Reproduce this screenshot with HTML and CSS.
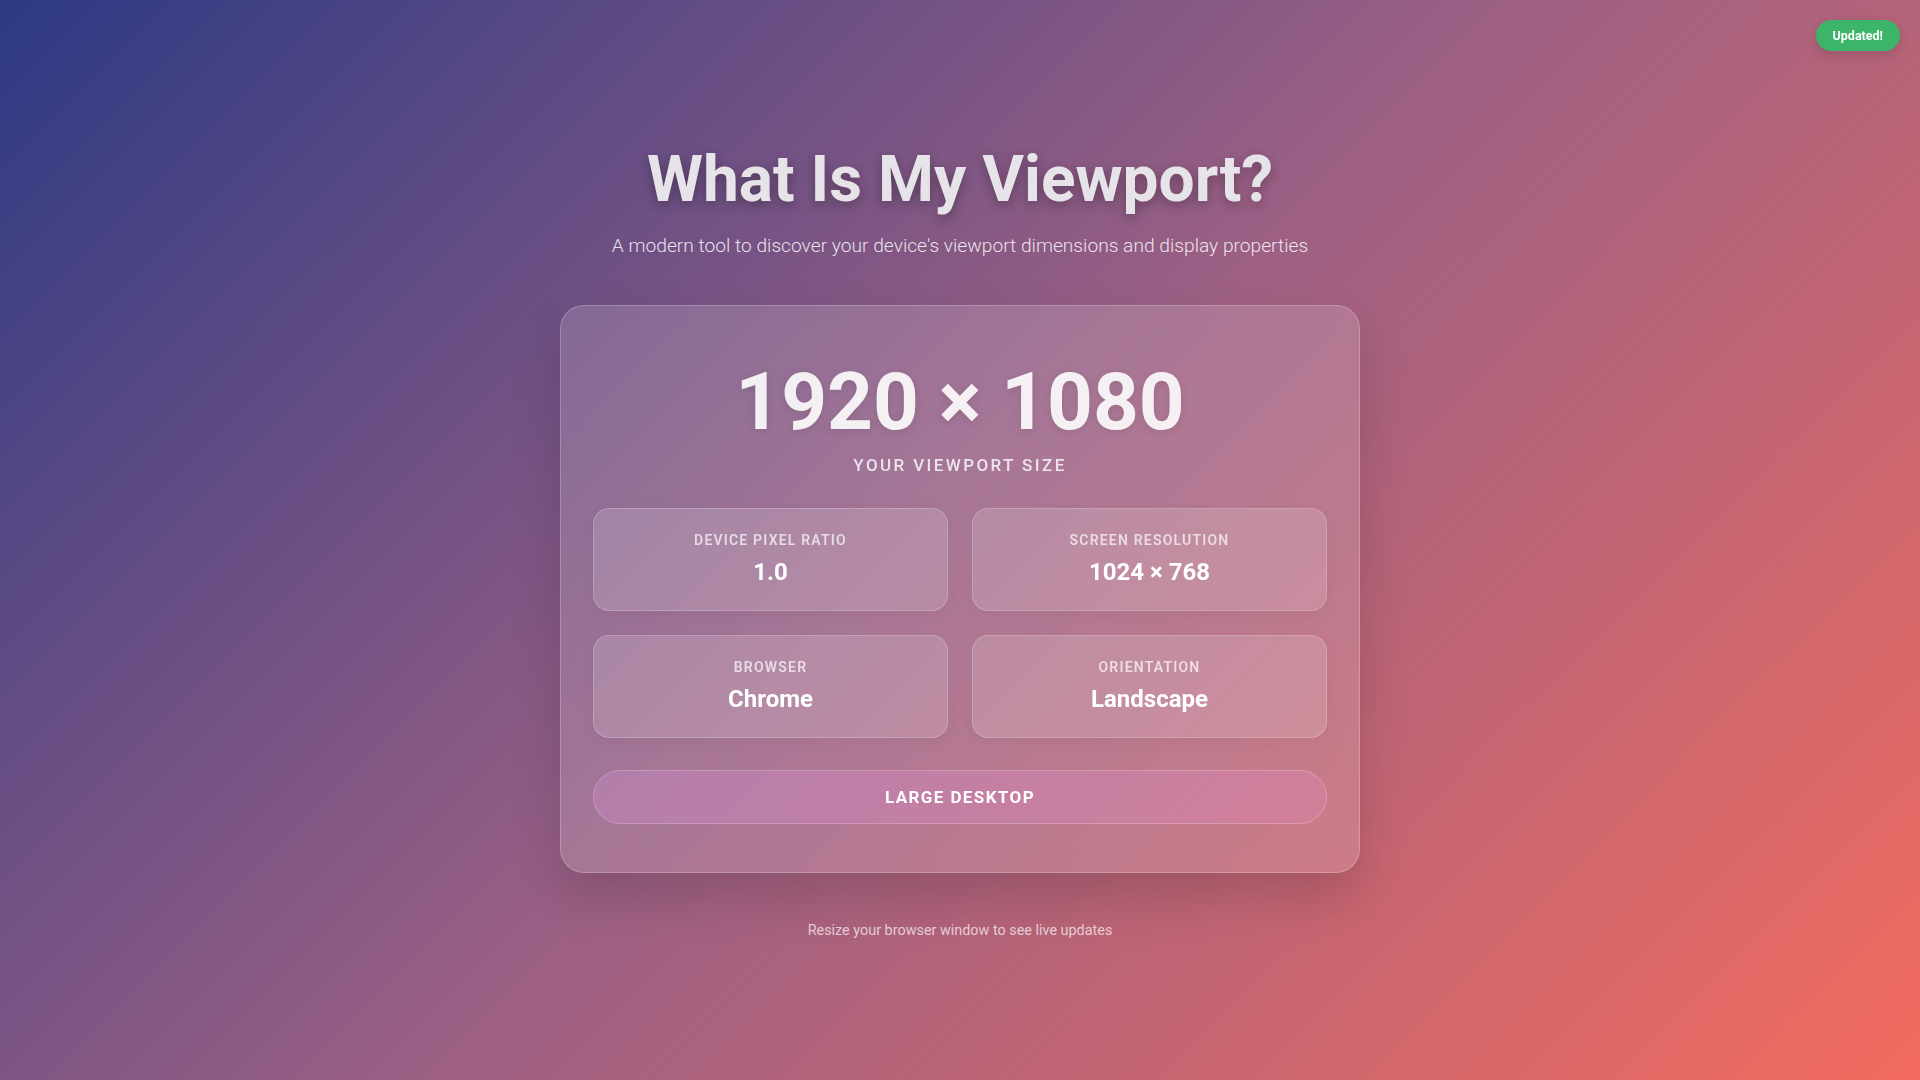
FILE: index.html
```html
<!DOCTYPE html>
<html lang="en">
<head>
<meta charset="UTF-8">
<title>What Is My Viewport?</title>
<link rel="stylesheet" href="styles.css">
</head>
<body>
  <div class="badge">Updated!</div>
  <main class="page">
    <h1 class="title">What Is My Viewport?</h1>
    <p class="subtitle">A modern tool to discover your device's viewport dimensions and display properties</p>
    <section class="card">
      <div class="size">1920 × 1080</div>
      <div class="size-label">Your Viewport Size</div>
      <div class="grid">
        <div class="info">
          <div class="info-label">Device Pixel Ratio</div>
          <div class="info-value">1.0</div>
        </div>
        <div class="info">
          <div class="info-label">Screen Resolution</div>
          <div class="info-value">1024 × 768</div>
        </div>
        <div class="info">
          <div class="info-label">Browser</div>
          <div class="info-value">Chrome</div>
        </div>
        <div class="info">
          <div class="info-label">Orientation</div>
          <div class="info-value">Landscape</div>
        </div>
      </div>
      <div class="device">Large Desktop</div>
    </section>
    <p class="footer">Resize your browser window to see live updates</p>
  </main>
</body>
</html>
```
FILE: styles.css
```css
* {
  box-sizing: border-box;
}

html, body {
  margin: 0;
  padding: 0;
}

body {
  min-height: 100vh;
  font-family: Roboto, "Liberation Sans", Arial, sans-serif;
  color: #fff;
  background: linear-gradient(135deg, #2d3a84 0%, #9c6084 50%, #f26b5e 100%);
  background-attachment: fixed;
}

.page {
  min-height: 100vh;
  display: flex;
  flex-direction: column;
  align-items: center;
  justify-content: center;
  padding: 4px 20px 0;
}

.title {
  margin: 0 0 13px;
  font-size: 64px;
  font-weight: 700;
  line-height: 1.2;
  color: #e6e4e8;
  text-shadow: 0 4px 12px rgba(0, 0, 0, 0.3);
}

.subtitle {
  margin: 0;
  font-size: 19.2px;
  font-weight: 300;
  line-height: 1.5;
  color: rgba(255, 255, 255, 0.85);
}

.card {
  margin-top: 44px;
  width: 800px;
  padding: 48px 32px;
  border-radius: 24px;
  background: rgba(255, 255, 255, 0.15);
  border: 1px solid rgba(255, 255, 255, 0.22);
  box-shadow: 0 25px 50px rgba(0, 0, 0, 0.15);
  backdrop-filter: blur(10px);
  text-align: center;
}

.size {
  margin-top: 4px;
  font-size: 80px;
  font-weight: 700;
  line-height: 1.1;
  color: rgba(255, 255, 255, 0.9);
  text-shadow: 0 2px 10px rgba(0, 0, 0, 0.1);
}

.size-label {
  margin-top: 7px;
  font-size: 17px;
  font-weight: 500;
  line-height: 1.5;
  letter-spacing: 2.4px;
  text-transform: uppercase;
  color: rgba(255, 255, 255, 0.8);
}

.grid {
  margin-top: 30px;
  display: grid;
  grid-template-columns: 1fr 1fr;
  gap: 24px;
}

.info {
  padding: 22px 16px;
  border-radius: 16px;
  background: rgba(255, 255, 255, 0.15);
  border: 1px solid rgba(255, 255, 255, 0.2);
  box-shadow: 0 4px 15px rgba(0, 0, 0, 0.05);
  display: flex;
  flex-direction: column;
  gap: 6px;
}

.info-label {
  font-size: 14px;
  font-weight: 600;
  line-height: 1.4;
  letter-spacing: 1.2px;
  text-transform: uppercase;
  color: rgba(255, 255, 255, 0.7);
}

.info-value {
  font-size: 24px;
  font-weight: 700;
  line-height: 1.3;
  color: #fff;
}

.device {
  margin-top: 32px;
  padding: 16px;
  border-radius: 50px;
  background: linear-gradient(135deg, rgba(220, 150, 225, 0.28), rgba(232, 140, 200, 0.28));
  border: 1px solid rgba(255, 255, 255, 0.2);
  font-size: 17px;
  font-weight: 700;
  line-height: 1.2;
  letter-spacing: 1.4px;
  text-transform: uppercase;
  color: #fff;
}

.footer {
  margin: 47px 0 0;
  font-size: 14.4px;
  line-height: 1.5;
  color: rgba(255, 255, 255, 0.7);
}

.badge {
  position: fixed;
  top: 20px;
  right: 20px;
  padding: 8px 17px;
  border-radius: 20px;
  background: #3cb46a;
  color: #fff;
  font-family: Roboto, "Liberation Sans", Arial, sans-serif;
  font-size: 12.5px;
  font-weight: 700;
  line-height: 1.2;
  box-shadow: 0 4px 12px rgba(0, 0, 0, 0.15);
}
```
